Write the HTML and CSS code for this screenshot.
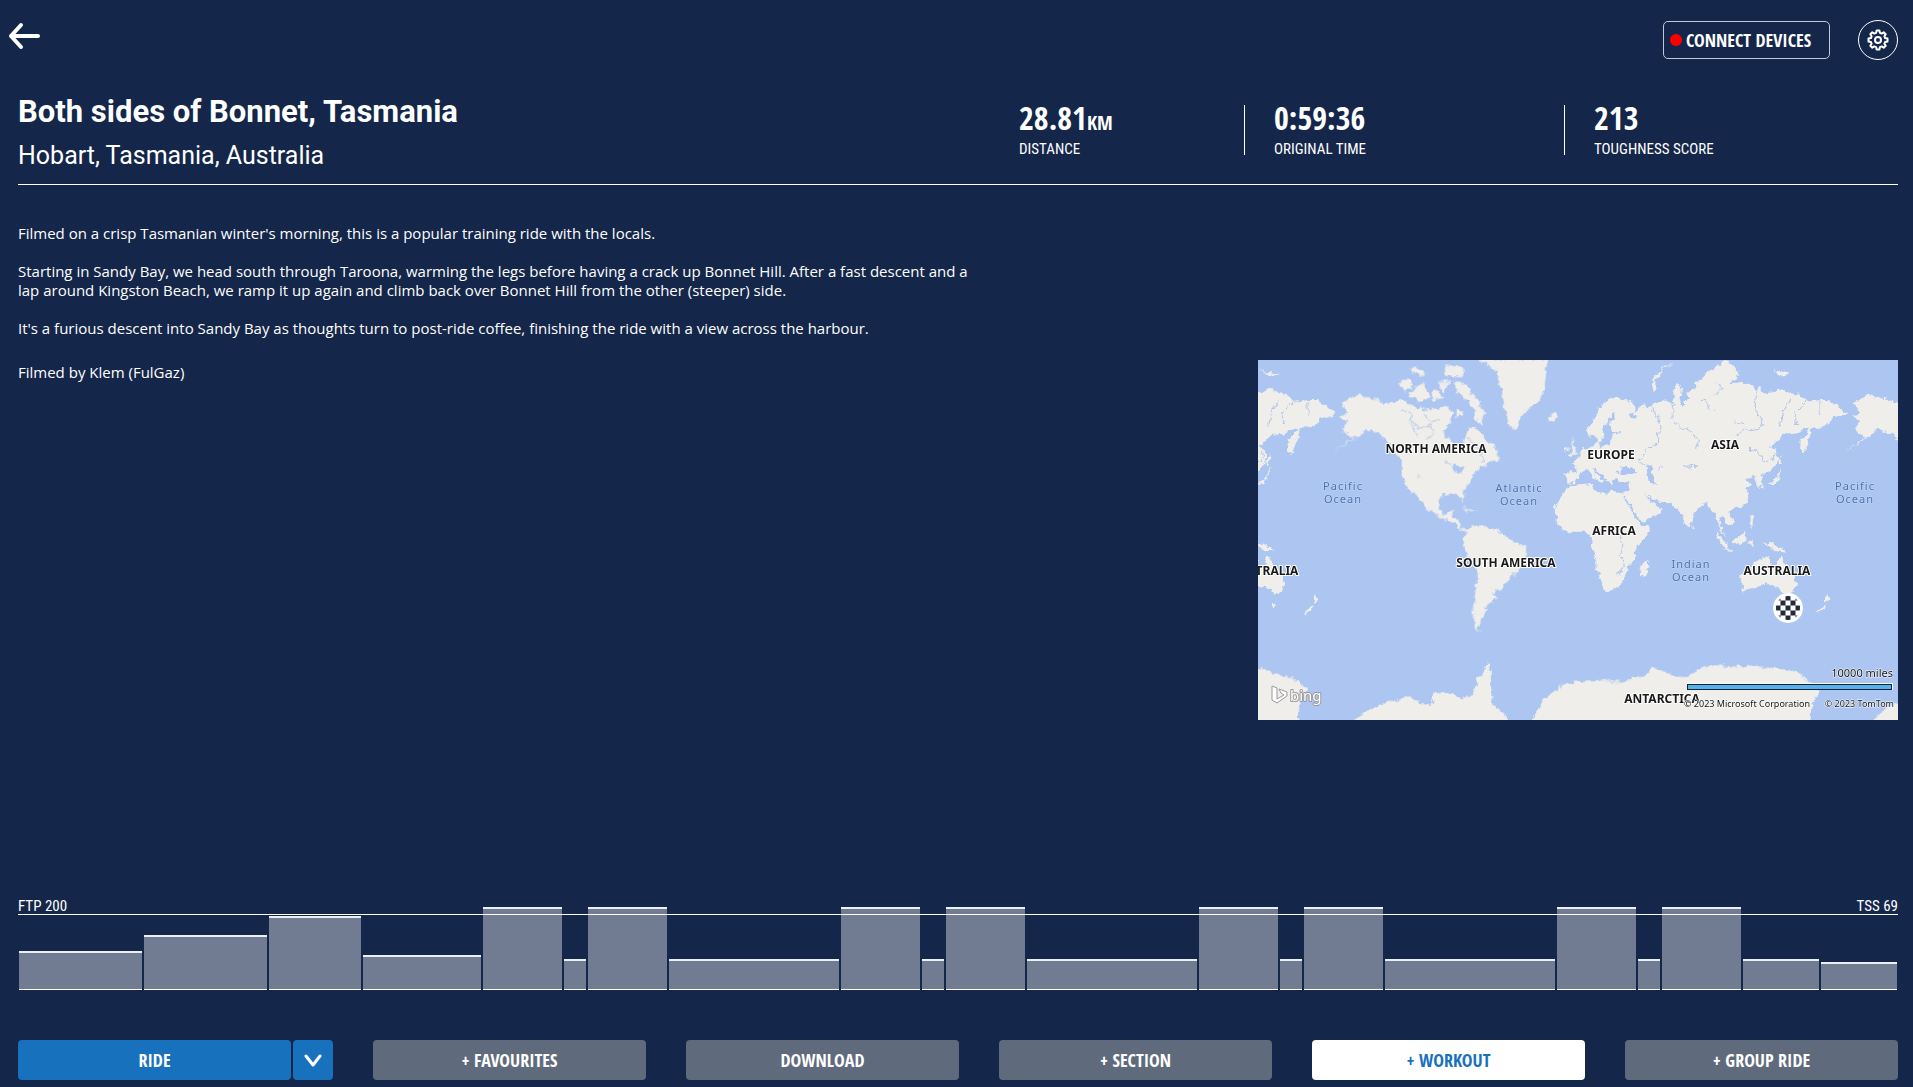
FILE: index.html
```html
<!DOCTYPE html>
<html lang="en">
<head>
<meta charset="utf-8">
<title>Both sides of Bonnet, Tasmania</title>
<link rel="stylesheet" href="styles.css">
</head>
<body>
<nav class="topbar">
  <button class="back" type="button" aria-label="Back">
    <svg width="32" height="28" viewBox="0 0 32 28" fill="none" stroke="#fff" stroke-width="4" stroke-linecap="round" stroke-linejoin="round"><path d="M13 3 3 14l10 11M3 14h27"/></svg>
  </button>
  <div class="tools">
    <button class="connect" type="button"><span class="dot"></span>CONNECT DEVICES</button>
    <button class="gear" type="button" aria-label="Settings">
      <svg width="24" height="24" viewBox="-12 -12 24 24" fill="none" stroke="#fff" stroke-width="2" stroke-linejoin="round"><path d="M-1.9-7.1-1.4-9.5H1.4L1.9-7.1 3.7-6.4 5.7-7.7 7.7-5.7 6.4-3.7 7.1-1.9 9.5-1.4V1.4L7.1 1.9 6.4 3.7 7.7 5.7 5.7 7.7 3.7 6.4 1.9 7.1 1.4 9.5H-1.4L-1.9 7.1-3.7 6.4-5.7 7.7-7.7 5.7-6.4 3.7-7.1 1.9-9.5 1.4V-1.4L-7.1-1.9-6.4-3.7-7.7-5.7-5.7-7.7-3.7-6.4Z"/><circle r="3"/></svg>
    </button>
  </div>
</nav>

<header class="head">
  <div class="names">
    <h1>Both sides of Bonnet, Tasmania</h1>
    <p class="place">Hobart, Tasmania, Australia</p>
  </div>
  <dl class="stats">
    <div class="stat"><dt>DISTANCE</dt><dd>28.81<small>KM</small></dd></div>
    <div class="stat"><dt>ORIGINAL TIME</dt><dd>0:59:36</dd></div>
    <div class="stat"><dt>TOUGHNESS SCORE</dt><dd>213</dd></div>
  </dl>
</header>

<main class="main">
  <section class="about">
    <p>Filmed on a crisp Tasmanian winter's morning, this is a popular training ride with the locals.</p>
    <p>Starting in Sandy Bay, we head south through Taroona, warming the legs before having a crack up Bonnet Hill. After a fast descent and a lap around Kingston Beach, we ramp it up again and climb back over Bonnet Hill from the other (steeper) side.</p>
    <p>It's a furious descent into Sandy Bay as thoughts turn to post-ride coffee, finishing the ride with a view across the harbour.</p>
    <p class="credit">Filmed by Klem (FulGaz)</p>
  </section>
  <svg class="map" viewBox="0 0 640 360" role="img" aria-label="World map with the ride location">
    <defs>
      <filter id="coast" x="-5%" y="-5%" width="110%" height="110%"><feTurbulence type="fractalNoise" baseFrequency="0.18" numOctaves="3" seed="4"/><feDisplacementMap in="SourceGraphic" scale="7" xChannelSelector="R" yChannelSelector="G"/></filter>
      <clipPath id="disc"><circle cx="530" cy="248" r="12"/></clipPath>
      <g id="eurasia" transform="translate(960 0)">
        <path class="land" d="M-15 368 20 366 18 345 5 340 22 330 40 300 60 292 75 288 80 275 88 278 86 292 120 290 125 275 122 262 150 247 125 246 118 225 130 205 135 190 125 192 112 215 98 235 100 255 92 272 82 278 75 255 60 262 50 240 62 225 75 200 95 165 115 148 140 142 165 150 195 165 197 185 172 190 182 205 200 210 192 190 210 175 220 160 232 172 255 160 270 155 285 150 312 165 310 130 320 105 333 115 328 150 340 175 345 150 360 150 352 130 380 110 372 98 400 85 410 65 440 50 465 33 490 45 505 65 500 85 480 100 520 95 550 105 560 120 570 110 580 130 620 125 635 115 665 130 690 135 710 155 750 150 780 150 800 165 830 190 810 200 785 205 780 225 750 230 725 238 720 260 710 290 698 312 690 300 692 270 710 250 718 235 700 240 685 250 640 255 615 280 600 290 620 300 625 325 615 350 590 370 575 375 575 395 565 415 558 405 560 390 550 378 525 388 540 400 527 415 540 430 530 460 510 475 485 478 478 490 490 510 480 525 465 510 455 500 448 515 460 545 470 560 455 545 443 515 440 490 425 485 410 460 395 465 375 490 365 520 355 535 340 510 335 485 315 470 300 460 265 455 240 445 228 430 235 450 250 460 262 470 276 470 270 490 240 505 215 515 200 495 180 460 165 438 160 440 172 455 188 490 205 515 212 525 240 525 238 545 215 575 195 600 192 630 175 650 165 680 150 710 120 725 103 725 95 695 80 660 78 620 65 590 68 570 50 545 0 545-10 548-40 515-45 480-30 440 5 405 65 400 75 420 110 432 125 425 155 430 172 422 178 395 150 400 138 385 125 392 122 408 108 385 85 365 70 355 75 370 105 392 95 402 70 375 50 358 30 372 15 398-10 402Z"/>
        <path class="water" d="M142 370 158 352 175 358 185 350 200 368 180 372ZM228 347 250 345 245 365 255 375 255 402 237 398Z"/>
        <path class="land" d="M318 40 280 55 260 90 255 130 246 118 252 85 280 50ZM610 60 660 72 640 80ZM595 405 620 398 632 370 638 350 620 385ZM635 312 632 345 622 345ZM575 400 585 418 572 410ZM491 572 522 543 530 560 515 585 495 582ZM436 543 478 590 470 597 440 560ZM450 595 500 602 480 605ZM540 490 550 505 545 540ZM365 525 372 540 364 542ZM535 575 550 568 545 595ZM575 578 610 580 650 605 615 600ZM210 678 212 650 225 632 237 630 235 655 222 680Z"/>
        <path class="land" d="M510 680 515 668 548 645 555 640 575 627 588 625 602 622 598 640 620 652 628 615 640 630 650 652 675 680 678 700 672 722 655 735 635 722 620 710 600 708 590 702 560 712 520 725ZM640 762 652 762 648 778ZM768 733 780 745 768 765ZM760 765 738 790 745 793 768 770Z"/>
        <path class="river" d="M313 155 305 205 330 230 365 245 385 270 380 295M560 120 555 180 578 215 575 235 525 240 500 255M490 210 525 228M245 170 262 200 270 230 262 280 225 300 210 335 225 345M660 145 640 190 630 230M705 155 685 180 672 190 680 225M750 155 750 195M440 95 460 120 430 135M395 155 410 150 415 175 435 185M535 298 560 300 580 335 610 330 615 310M275 350 265 365M335 350 385 345 360 360M155 550 155 620 165 645M140 680 165 640"/>
      </g>
      <g id="americas">
        <path class="land" d="M275 160 300 145 320 135 370 145 410 160 450 150 490 170 520 180 560 175 590 172 610 185 600 215 580 240 588 265 620 280 632 298 640 285 645 262 658 230 682 235 705 268 735 290 745 330 715 340 690 355 665 380 660 400 638 425 642 458 628 435 592 432 570 440 565 470 578 492 592 490 610 478 605 500 625 510 635 535 660 540 645 545 615 525 565 497 535 480 500 435 475 415 455 380 455 330 430 305 412 270 385 248 345 240 325 258 245 305 312 262 300 255 275 240 295 215 272 200 295 190ZM650 545 672 525 700 527 742 540 762 555 800 578 832 592 830 615 808 650 805 665 780 680 760 715 725 728 745 742 712 765 700 795 690 815 685 835 697 848 675 832 672 800 670 770 680 700 685 665 665 635 645 600 640 570Z"/>
        <path class="land" d="M683 28H895L885 70 885 110 870 148 850 165 820 190 800 236 780 232 765 180 755 120 738 60ZM612 92 650 105 680 148 703 190 697 222 670 205 680 185 655 155 622 130ZM450 90 475 85 490 110 460 125ZM475 130 520 95 540 140 510 158ZM560 95 600 95 580 130ZM480 50 510 55 530 75 490 75ZM580 45 640 50 640 78 590 80ZM555 115 580 145 545 150ZM620 175 640 195 620 205ZM892 200 912 190 925 200 905 217ZM962 262 975 290 985 312 958 318 966 295ZM945 295 957 292 950 308ZM630 470 665 480 690 490 655 482Z"/>
        <path class="water" d="M608 345 640 350 635 370 615 365Z"/>
        <path class="river" d="M455 180 485 190 480 210 510 235 545 225 550 250 530 270M520 190 540 215 570 210M650 260 690 300 700 340M480 215 500 260M580 330 605 345M500 380 512 375"/>
      </g>
    </defs>
    <rect width="640" height="360" fill="#acc6f1"/>
    <g filter="url(#coast)">
      <g transform="translate(-8 -10) scale(.33333)">
        <use href="#eurasia"/><use href="#eurasia" x="-1536"/>
        <use href="#americas"/><use href="#americas" x="1536"/>
        <path class="land" d="M0 950 24 951 80 970 120 983 150 1000 175 1015 150 1045 140 1130H0ZM312 1112 340 1090 385 1065 430 1052 475 1040 515 1062 545 1065 550 1025 575 1030 600 1030 640 1045 668 1035 680 990 700 970 712 940 722 950 725 1060 745 1078 775 1105 778 1130H300ZM845 1112 880 1050 935 1005 975 995 1040 990 1120 997 1150 985 1180 980 1208 950 1260 972 1300 985 1335 965 1360 950 1400 945 1450 950 1530 950 1600 957 1640 965 1680 1000 1710 1025 1685 1060 1680 1130H840ZM1870 1112 1900 1080 1960 1050V1120H1870Z"/>
      </g>
    </g>
    <g class="ocean">
      <text x="85" y="130">Pacific</text><text x="85" y="143">Ocean</text>
      <text x="261" y="132">Atlantic</text><text x="261" y="145">Ocean</text>
      <text x="433" y="208">Indian</text><text x="433" y="221">Ocean</text>
      <text x="597" y="130">Pacific</text><text x="597" y="143">Ocean</text>
    </g>
    <g class="continent">
      <text x="178" y="93">NORTH AMERICA</text><text x="248" y="207">SOUTH AMERICA</text>
      <text x="353" y="99">EUROPE</text><text x="467" y="89">ASIA</text><text x="356" y="175">AFRICA</text>
      <text x="519" y="215">AUSTRALIA</text><text x="7" y="215">AUSTRALIA</text><text x="404" y="343">ANTARCTICA</text>
    </g>
    <circle cx="530" cy="248" r="15" fill="#fff"/>
    <path clip-path="url(#disc)" fill="#232a3b" d="M527.500 235.500h5v5h-5zM522.500 240.500h5v5h-5zM532.500 240.500h5v5h-5zM517.500 245.500h5v5h-5zM527.500 245.500h5v5h-5zM537.500 245.500h5v5h-5zM522.500 250.500h5v5h-5zM532.500 250.500h5v5h-5zM517.500 255.500h5v5h-5zM527.500 255.500h5v5h-5zM537.500 255.500h5v5h-5zM517.500 235.500h5v5h-5zM537.500 235.500h5v5h-5z"/>
    <path d="M14 326l5 2v11l7-4-3-2-2-4 8 3v4l-10 7-5-3z" fill="#fff" stroke="#999" stroke-linejoin="round"/>
    <text class="bing" x="32" y="341">bing</text>
    <rect x="429" y="323" width="206" height="7" fill="#fff"/>
    <rect x="429.500" y="324.500" width="204" height="5" fill="#57b2ea" stroke="#12223c"/>
    <g class="legal">
      <text class="miles" x="635" y="317">10000 miles</text>
      <text x="552" y="347">© 2023 Microsoft Corporation</text><text x="636" y="347">© 2023 TomTom</text>
    </g>
  </svg>
</main>

<section class="profile" aria-label="Workout profile">
  <div class="levels"><span>FTP 200</span><span>TSS 69</span></div>
  <div class="bars">
    <i style="--w:123;--h:39"></i><i style="--w:123;--h:55"></i><i style="--w:92;--h:74"></i><i style="--w:118;--h:35"></i>
    <i style="--w:79;--h:83"></i><i style="--w:22;--h:31"></i><i style="--w:79;--h:83"></i><i style="--w:170;--h:31"></i>
    <i style="--w:79;--h:83"></i><i style="--w:22;--h:31"></i><i style="--w:79;--h:83"></i><i style="--w:170;--h:31"></i>
    <i style="--w:79;--h:83"></i><i style="--w:22;--h:31"></i><i style="--w:79;--h:83"></i><i style="--w:170;--h:31"></i>
    <i style="--w:79;--h:83"></i><i style="--w:22;--h:31"></i><i style="--w:79;--h:83"></i><i style="--w:76;--h:31"></i><i style="--w:76;--h:28"></i>
  </div>
</section>

<footer class="actions">
  <div class="split">
    <button class="btn blue" type="button">RIDE</button>
    <button class="btn blue more" type="button" aria-label="More ride options">
      <svg width="18" height="14" viewBox="0 0 18 14" fill="none" stroke="#fff" stroke-width="3" stroke-linecap="round" stroke-linejoin="round"><path d="m2 3 7 9 7-9"/></svg>
    </button>
  </div>
  <button class="btn" type="button">+ FAVOURITES</button>
  <button class="btn" type="button">DOWNLOAD</button>
  <button class="btn" type="button">+ SECTION</button>
  <button class="btn white" type="button">+ WORKOUT</button>
  <button class="btn" type="button">+ GROUP RIDE</button>
</footer>
</body>
</html>
```
FILE: styles.css
```css
* { box-sizing: border-box; margin: 0; padding: 0; }
body {
  min-height: 100vh;
  display: flex;
  flex-direction: column;
  background: #142649;
  color: #fff;
  font-family: "Open Sans", "Noto Sans", sans-serif;
  padding: 20px 15px 7px 18px;
}
button { font: inherit; color: inherit; border: 0; background: none; cursor: pointer; }
svg { display: block; }

.topbar { display: flex; justify-content: space-between; height: 40px; }
.back { display: flex; align-items: center; width: 32px; height: 32px; margin-left: -10px; }
.tools { display: flex; align-items: center; gap: 28px; }
.connect, .btn { font: bold 18px "Open Sans Condensed", "Roboto Condensed", sans-serif; }
.connect {
  display: flex; align-items: center; gap: 4px;
  width: 167px; height: 38px; padding-left: 6px;
  border: 1px solid #c3c9d4; border-radius: 5px;
}
.dot { width: 12px; height: 12px; border-radius: 50%; background: #f00; }
.gear {
  display: flex; align-items: center; justify-content: center;
  width: 40px; height: 40px; border: 1px solid #fff; border-radius: 50%;
}

.head {
  display: flex; height: 125px; padding-top: 28px;
  border-bottom: 1px solid #fff;
}
.names { flex: 1001 1 0; }
h1 { font: bold 31px/48px Roboto, sans-serif; }
.place { font: 25px/40px Roboto, sans-serif; }
.stats {
  flex: 879 1 0; height: 50px; margin-top: 17px;
  display: grid; grid-template-columns: 225fr 320fr 334fr;
}
.stat { display: flex; flex-direction: column-reverse; justify-content: flex-end; padding-left: 29px; border-left: 1px solid #fff; }
.stat:first-child { padding-left: 0; border-left: 0; }
dd { height: 28px; font: bold 32px/26px "Open Sans Condensed", "Roboto Condensed", sans-serif; }
dd small { font-size: 20px; line-height: 20px; }
dt { height: 22px; font: 15px/32px "Roboto Condensed", "Open Sans Condensed", sans-serif; }

.main { flex: 1; display: flex; justify-content: space-between; }
.about { width: 51%; padding-top: 39px; font-size: 15px; line-height: 19px; }
.about p { margin-bottom: 19px; }
.about .credit { margin-top: 25px; }
.map { width: 640px; height: 360px; align-self: center; overflow: hidden; }
.land { fill: #efeeea; }
.water { fill: #acc6f1; }
.river { fill: none; stroke: #b0c4e8; stroke-width: 3; }
.map text { font-family: "Noto Sans", "Open Sans", sans-serif; text-anchor: middle; paint-order: stroke; stroke-linejoin: round; }
.continent text { font-size: 12px; font-weight: bold; fill: #1a1a1a; stroke: #fff; stroke-width: 2px; }
.ocean text { font-size: 11px; letter-spacing: 1px; fill: #4c72b0; stroke: #c3d6f6; stroke-width: 1px; }
.map .legal text { font-size: 9px; text-anchor: end; fill: #111; stroke: #fff; stroke-width: 1px; }
.map .legal .miles { font-size: 11px; }
.map .bing { font-size: 15px; text-anchor: start; fill: #fff; stroke: #999; stroke-width: 2px; }

.profile { display: flex; flex-direction: column; height: 95px; }
.levels {
  display: flex; justify-content: space-between; height: 20px;
  border-bottom: 1px solid #fff; position: relative; z-index: 1;
  font: 15px/22px "Roboto Condensed", "Open Sans Condensed", sans-serif;
}
.bars { display: flex; align-items: flex-end; gap: 2px; height: 84px; margin-top: -9px; padding: 0 1px; }
.bars i {
  flex: var(--w) 1 0; height: calc(var(--h) * 1px);
  background: #717b92; border-top: 2px solid #e9f1f6; border-bottom: 1px solid #fff;
}

.actions { display: flex; gap: 40px; margin-top: 50px; }
.btn { flex: 1 1 0; height: 40px; border-radius: 4px; background: #5f6b7d; }
.split { flex: 1 1 42px; display: flex; gap: 2px; }
.blue { background: #1771bc; }
.white { background: #fff; color: #1771bc; }
.more { flex: none; width: 40px; display: flex; align-items: center; justify-content: center; }
```
